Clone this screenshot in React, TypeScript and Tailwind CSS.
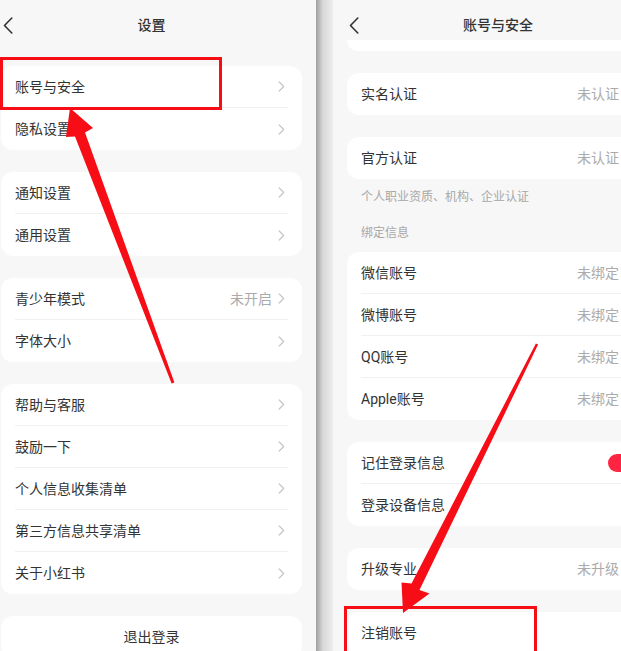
import React from "react";

const Chevron = () => (
  <svg width="7" height="11" viewBox="0 0 7 11" className="shrink-0">
    <path d="M1.2 1l4.5 4.5-4.5 4.5" fill="none" stroke="#c6c6c6" strokeWidth="1.2" strokeLinecap="round" strokeLinejoin="round" />
  </svg>
);

const Back = () => (
  <svg width="10" height="17" viewBox="0 0 10 17">
    <path d="M8.8 1L1.5 8.5 8.8 16" fill="none" stroke="#333" strokeWidth="1.6" strokeLinecap="round" strokeLinejoin="round" />
  </svg>
);

type Row = { label: string; value?: string; chevron?: boolean; toggle?: boolean };

const Card = ({ rows }: { rows: Row[] }) => (
  <div className="mx-[14px] shrink-0 rounded-[12px] bg-white">
    {rows.map((r, i) => (
      <div key={r.label} className="px-[14px]">
        <div
          className={
            "flex h-[42px] items-center justify-between " +
            (i < rows.length - 1 ? "border-b border-[#f1f1f1]" : "")
          }
        >
          <span className="text-[14px] leading-[20px] text-[#333]">{r.label}</span>
          <div className="flex items-center gap-[6px] pr-[3px]">
            {r.value && <span className="text-[14px] leading-[20px] text-[#ababab]">{r.value}</span>}
            {r.chevron !== false && !r.toggle && <Chevron />}
            {r.toggle && (
              <div className="-mr-[12px] flex h-[18px] w-[36px] items-center justify-end rounded-full bg-[#ff2442] pr-[2px]">
                <div className="h-[14px] w-[14px] rounded-full bg-white" />
              </div>
            )}
          </div>
        </div>
      </div>
    ))}
  </div>
);

const Header = ({ title }: { title: string }) => (
  <div className="grid h-[40px] shrink-0 grid-cols-[1fr_auto_1fr] items-center px-[16px] pt-[10px]">
    <div className="flex items-center">
      <Back />
    </div>
    <span className="text-[14px] leading-[20px] font-medium text-[#333]">{title}</span>
    <div />
  </div>
);

export default function App() {
  return (
    <div className="relative flex h-[651px] w-[621px] items-start overflow-hidden bg-[#f7f7f7] font-[Roboto,'Noto_Sans_CJK_SC',sans-serif]">
      {/* Left phone */}
      <div className="-ml-[13px] flex w-[329px] shrink-0 flex-col bg-[#f7f7f7]">
        <Header title="设置" />
        <div className="flex shrink-0 flex-col gap-[22px] pt-[26px]">
          <Card rows={[{ label: "账号与安全" }, { label: "隐私设置" }]} />
          <Card rows={[{ label: "通知设置" }, { label: "通用设置" }]} />
          <Card rows={[{ label: "青少年模式", value: "未开启" }, { label: "字体大小" }]} />
          <Card
            rows={[
              { label: "帮助与客服" },
              { label: "鼓励一下" },
              { label: "个人信息收集清单" },
              { label: "第三方信息共享清单" },
              { label: "关于小红书" },
            ]}
          />
          <div className="mx-[14px] flex h-[42px] shrink-0 items-center justify-center rounded-[12px] bg-white">
            <span className="text-[14px] leading-[20px] text-[#333]">退出登录</span>
          </div>
        </div>
      </div>

      {/* Divider */}
      <div className="h-[651px] w-[17px] shrink-0 bg-gradient-to-r from-[#9f9f9f] via-[#d8d8d8] via-40% to-[#ededed]" />

      {/* Right phone */}
      <div className="flex w-[330px] shrink-0 flex-col bg-[#f7f7f7]">
        <Header title="账号与安全" />
        <div className="mx-[14px] h-[11px] shrink-0 rounded-b-[12px] bg-white" />
        <div className="flex shrink-0 flex-col pt-[22px]">
          <Card rows={[{ label: "实名认证", value: "未认证" }]} />
          <div className="mt-[22px] shrink-0">
            <Card rows={[{ label: "官方认证", value: "未认证" }]} />
          </div>
          <div className="shrink-0 px-[28px] pt-[10px] text-[12px] leading-[17px] text-[#a8a8a8]">
            个人职业资质、机构、企业认证
          </div>
          <div className="shrink-0 px-[28px] pt-[19px] pb-[10px] text-[12px] leading-[17px] text-[#a8a8a8]">绑定信息</div>
          <Card
            rows={[
              { label: "微信账号", value: "未绑定" },
              { label: "微博账号", value: "未绑定" },
              { label: "QQ账号", value: "未绑定" },
              { label: "Apple账号", value: "未绑定" },
            ]}
          />
          <div className="mt-[22px] shrink-0">
            <Card rows={[{ label: "记住登录信息", toggle: true }, { label: "登录设备信息" }]} />
          </div>
          <div className="mt-[22px] shrink-0">
            <Card rows={[{ label: "升级专业", value: "未升级" }]} />
          </div>
          <div className="mt-[22px] shrink-0">
            <Card rows={[{ label: "注销账号" }]} />
          </div>
        </div>
      </div>

      {/* Annotation overlay */}
      <svg className="pointer-events-none absolute left-0 top-0" width="621" height="651" viewBox="0 0 621 651">
        <rect x="1.5" y="58.5" width="219" height="50" fill="none" stroke="#f70d16" strokeWidth="3" />
        <polygon
          fill="#f70d16"
          points="70,108 93,128 85,132.5 174.4,382.5 171.6,383.5 75,136.5 66,137"
        />
        <rect x="345.5" y="607.5" width="190" height="100" fill="none" stroke="#f70d16" strokeWidth="3" />
        <polygon
          fill="#f70d16"
          points="403,613 401.5,582.5 411.5,583.5 535.9,343.5 538.1,344.5 419.5,590 429.5,593.5"
        />
      </svg>
    </div>
  );
}
